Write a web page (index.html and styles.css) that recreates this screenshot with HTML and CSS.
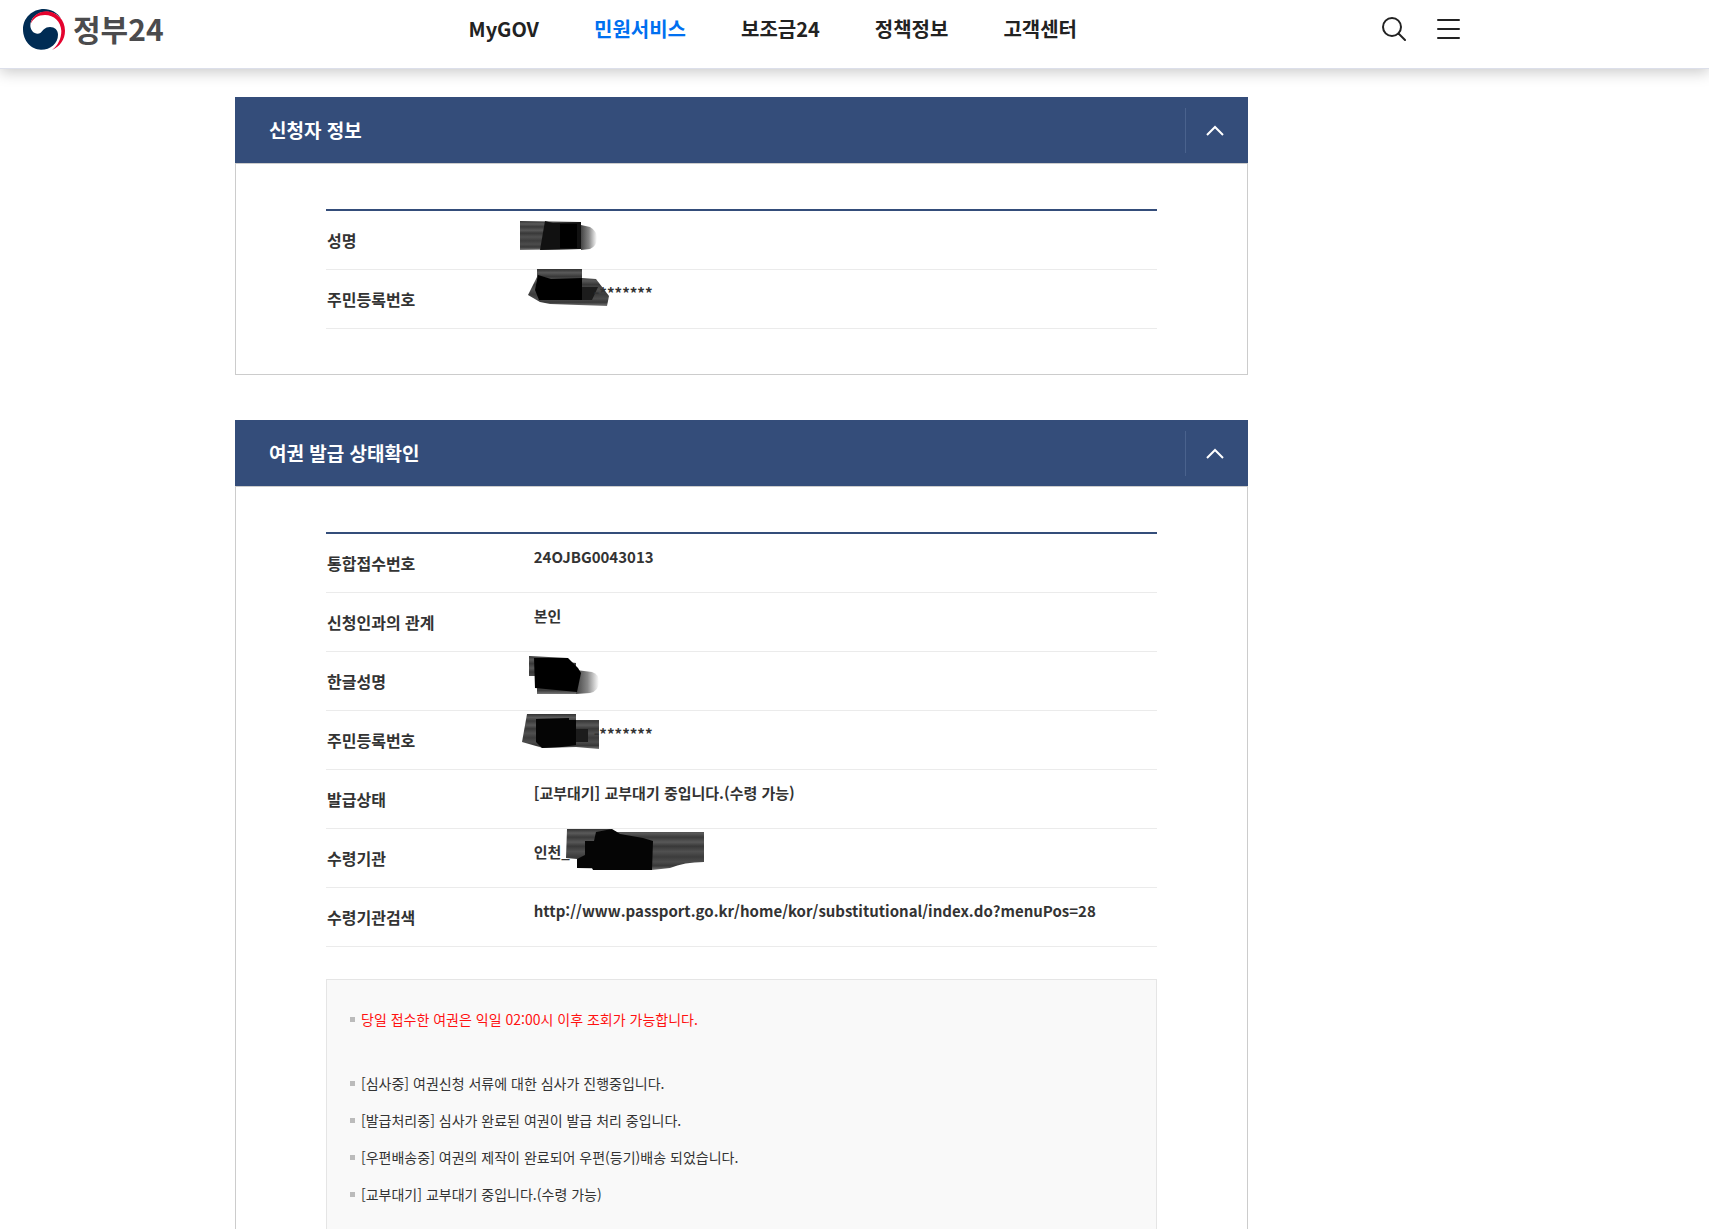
FILE: index.html
```html
<!DOCTYPE html>
<html lang="ko">
<head>
    <meta charset="UTF-8">
    <meta name="viewport" content="width=device-width, initial-scale=1.0">
    <title>정부24</title>
    <link rel="stylesheet" href="styles.css">
</head>
<body>

    <!-- shared fills for the masked values -->
    <svg class="defs" width="0" height="0" aria-hidden="true">
        <defs>
            <linearGradient id="streak" x1="0" y1="0" x2="0" y2="1">
                <stop offset="0" stop-color="#333"/>
                <stop offset="0.1" stop-color="#5a5a5a"/>
                <stop offset="0.2" stop-color="#3a3a3a"/>
                <stop offset="0.32" stop-color="#585858"/>
                <stop offset="0.42" stop-color="#383838"/>
                <stop offset="0.55" stop-color="#505050"/>
                <stop offset="0.68" stop-color="#3c3c3c"/>
                <stop offset="0.8" stop-color="#4c4c4c"/>
                <stop offset="0.9" stop-color="#383838"/>
                <stop offset="1" stop-color="#777"/>
            </linearGradient>
            <linearGradient id="fade" x1="0" y1="0" x2="1" y2="0">
                <stop offset="0" stop-color="#444"/>
                <stop offset="0.5" stop-color="#888"/>
                <stop offset="1" stop-color="#fff"/>
            </linearGradient>
        </defs>
    </svg>

    <header>
        <div class="header-inner">
            <a href="/" class="logo">
                <svg width="44" height="43" viewBox="66 24 132 129" aria-hidden="true">
                    <path fill="#002c54" d="M184 56C172 38 153 27 132 27C97 27 69 54 69 88C69 122 93 149 123 149C152 149 174 130 174 104C174 90 164 81 150 81C134 81 130 91 122 98C109 107 92 95 91 78C90 54 112 35 138 35C157 35 173 42 184 56Z"/>
                    <path fill="#e4032e" d="M92 72C95 49 116 34 140 34C172 36 195 61 195 92C195 118 180 139 156 150C174 136 184 116 184 93C183 65 162 45 135 45C115 45 99 55 92 72Z"/>
                </svg>
                <span>정부24</span>
            </a>
            <nav>
                <ul>
                    <li><a href="/mygov">MyGOV</a></li>
                    <li><a href="/minwon" class="active">민원서비스</a></li>
                    <li><a href="/subsidy">보조금24</a></li>
                    <li><a href="/policy">정책정보</a></li>
                    <li><a href="/support">고객센터</a></li>
                </ul>
            </nav>
            <div class="header-buttons">
                <button type="button" aria-label="검색">
                    <svg width="24" height="24" viewBox="0 0 24 24" fill="none" stroke="#222" stroke-width="2" stroke-linecap="round">
                        <circle cx="10" cy="10" r="9"/>
                        <path d="M16.5 16.5L23 23"/>
                    </svg>
                </button>
                <button type="button" aria-label="전체메뉴">
                    <svg width="24" height="24" viewBox="0 0 24 24" fill="none" stroke="#222" stroke-width="2" stroke-linecap="round">
                        <path d="M2 3H23M2 12H23M2 21H23"/>
                    </svg>
                </button>
            </div>
        </div>
    </header>

    <main>
        <section class="card">
            <div class="card-title">
                <h2>신청자 정보</h2>
                <button type="button" aria-label="신청자 정보 접기">
                    <svg width="18" height="12" viewBox="0 0 18 12" fill="none" stroke="#fff" stroke-width="2"><path d="M1 11L9 3L17 11"/></svg>
                </button>
            </div>
            <div class="card-body">
                <table>
                    <tr>
                        <th scope="row">성명</th>
                        <td>
                            <svg class="mask" width="200" height="58" aria-hidden="true">
                                <path fill="url(#streak)" d="M6 10L67 11V38L6 39Z"/>
                                <path fill="url(#fade)" d="M67 14L76 16Q83 20 83 27Q83 35 76 38L67 39Z"/>
                                <path fill="#111" d="M31 10L39 12L67 11V38L26 39Z"/>
                                <path fill="#000" d="M46 13H63V37H46Z"/>
                            </svg>
                        </td>
                    </tr>
                    <tr>
                        <th scope="row">주민등록번호</th>
                        <td>
                            <svg class="mask" width="200" height="58" aria-hidden="true">
                                <path fill="url(#streak)" d="M23 -1H68V8L82 9L95 26L93 36L36 34L26 32L14 25L23 7Z"/>
                                <path fill="#000" d="M24 5L37 9L68 8V30H25L21 20Z"/>
                                <path fill="#1c1c1c" d="M68 17H84L78 30H68Z"/>
                            </svg>
                            <span class="masked-number">-*******</span>
                        </td>
                    </tr>
                </table>
            </div>
        </section>

        <section class="card card-last">
            <div class="card-title">
                <h2>여권 발급 상태확인</h2>
                <button type="button" aria-label="여권 발급 상태확인 접기">
                    <svg width="18" height="12" viewBox="0 0 18 12" fill="none" stroke="#fff" stroke-width="2"><path d="M1 11L9 3L17 11"/></svg>
                </button>
            </div>
            <div class="card-body">
                <table>
                    <tr>
                        <th scope="row">통합접수번호</th>
                        <td>24OJBG0043013</td>
                    </tr>
                    <tr>
                        <th scope="row">신청인과의 관계</th>
                        <td>본인</td>
                    </tr>
                    <tr>
                        <th scope="row">한글성명</th>
                        <td>
                            <svg class="mask" width="200" height="58" aria-hidden="true">
                                <path fill="url(#streak)" d="M15 4L54 6V10L62 11V42H23V36L21 24H15Z"/>
                                <path fill="url(#fade)" d="M62 18L78 20Q85 22 85 30Q85 39 76 41L62 42Z"/>
                                <path fill="#000" d="M20 6H54L64 16L67 21L63 40L21 36Z"/>
                            </svg>
                        </td>
                    </tr>
                    <tr>
                        <th scope="row">주민등록번호</th>
                        <td>
                            <svg class="mask" width="200" height="58" aria-hidden="true">
                                <path fill="url(#streak)" d="M13 3H62V9H85V38L62 36L29 37L8 31Z"/>
                                <path fill="#050505" d="M22 8L55 7V9H62V34L48 36L28 37L22 31Z"/>
                                <path fill="#1c1c1c" d="M62 18H74V31H62Z"/>
                            </svg>
                            <span class="masked-number">-*******</span>
                        </td>
                    </tr>
                    <tr>
                        <th scope="row">발급상태</th>
                        <td>[교부대기] 교부대기 중입니다.(수령 가능)</td>
                    </tr>
                    <tr>
                        <th scope="row">수령기관</th>
                        <td>
                            인천_
                            <svg class="mask" width="200" height="58" aria-hidden="true">
                                <path fill="url(#streak)" d="M53 0H96L103 3H190V33Q170 33 156 39L138 41L63 39V30L52 29Z"/>
                                <path fill="#050505" d="M82 3L98 0L106 5L129 9L139 12L138 41H79L78 39H63V30L71 26V12H80Z"/>
                            </svg>
                        </td>
                    </tr>
                    <tr>
                        <th scope="row">수령기관검색</th>
                        <td>http://www.passport.go.kr/home/kor/substitutional/index.do?menuPos=28</td>
                    </tr>
                </table>

                <ul class="notice">
                    <li class="warning">당일 접수한 여권은 익일 02:00시 이후 조회가 가능합니다.</li>
                    <li>[심사중] 여권신청 서류에 대한 심사가 진행중입니다.</li>
                    <li>[발급처리중] 심사가 완료된 여권이 발급 처리 중입니다.</li>
                    <li>[우편배송중] 여권의 제작이 완료되어 우편(등기)배송 되었습니다.</li>
                    <li>[교부대기] 교부대기 중입니다.(수령 가능)</li>
                </ul>
            </div>
        </section>
    </main>

</body>
</html>
```
FILE: styles.css
```css
* {
    margin: 0;
    padding: 0;
    box-sizing: border-box;
}

body {
    font-family: "Noto Sans CJK KR", sans-serif;
    font-size: 16px;
    color: #333;
    background-color: #fff;
    display: flex;
    flex-direction: column;
    min-height: 100vh;
}

ul {
    list-style: none;
}

button {
    background: none;
    border: none;
    cursor: pointer;
}

svg {
    display: block;
}

.defs {
    position: absolute;
}

/* Header */
header {
    border-bottom: 1px solid #dcdfea;
    box-shadow: 0 3px 14px rgba(0, 0, 0, 0.22);
}

.header-inner {
    display: flex;
    align-items: center;
    justify-content: space-between;
    max-width: 1483px;
    height: 68px;
    padding: 0 23px 10px 22px;
}

.logo {
    display: flex;
    align-items: center;
    gap: 7px;
    font-size: 30px;
    font-weight: 700;
    line-height: 40px;
    color: #4b4b4d;
    text-decoration: none;
}

.logo span {
    padding-bottom: 3px;
}

header nav ul {
    display: flex;
    gap: 55px;
}

header nav a {
    font-size: 20px;
    font-weight: 700;
    line-height: 30px;
    color: #222;
    text-decoration: none;
}

header nav a.active {
    color: #0070f0;
}

.header-buttons {
    display: flex;
    gap: 30px;
}

/* Cards */
main {
    flex: 1;
    display: flex;
    flex-direction: column;
    gap: 45px;
    width: 100%;
    max-width: 1483px;
    padding: 28px 235px 0;
}

.card-title {
    display: flex;
    align-items: center;
    justify-content: space-between;
    height: 66px;
    padding-left: 34px;
    background-color: #344d7a;
    color: #fff;
}

.card-title h2 {
    font-size: 19px;
    font-weight: 700;
    line-height: 28px;
}

.card-title button {
    display: flex;
    align-items: center;
    justify-content: center;
    width: 63px;
    height: 45px;
    padding-right: 4px;
    border-left: 1px solid #4a628d;
}

.card-body {
    padding: 45px 90px;
    border: 1px solid #ccc;
}

.card-last {
    flex: 1;
    display: flex;
    flex-direction: column;
}

.card-last .card-body {
    flex: 1;
    display: flex;
    flex-direction: column;
    padding-bottom: 0;
    border-bottom: none;
}

/* Info table */
table {
    width: 100%;
    border-top: 2px solid #344d7a;
    border-spacing: 0;
}

th,
td {
    height: 59px;
    border-bottom: 1px solid #ebebeb;
    font-weight: 700;
    line-height: 24px;
    text-align: left;
}

th {
    width: 25%;
    padding-left: 1px;
}

td {
    position: relative;
    padding-bottom: 12px;
    font-size: 15px;
}

.masked-number {
    position: relative;
    padding-left: 60px;
}

/* Ink strokes over private values */
.mask {
    position: absolute;
    top: 0;
    left: -20px;
    overflow: visible;
}

/* Notice box */
.notice {
    flex: 1;
    margin-top: 32px;
    padding: 21px 23px 0;
    border: 1px solid #e5e5e5;
    border-bottom: none;
    background-color: #f9f9f9;
    font-size: 14px;
    line-height: 37px;
}

.notice li {
    display: flex;
    align-items: center;
    gap: 6px;
}

.notice li::before {
    content: "";
    width: 5px;
    height: 5px;
    background-color: #bbb;
}

.notice .warning {
    margin-bottom: 27px;
    color: #f11;
}
```
